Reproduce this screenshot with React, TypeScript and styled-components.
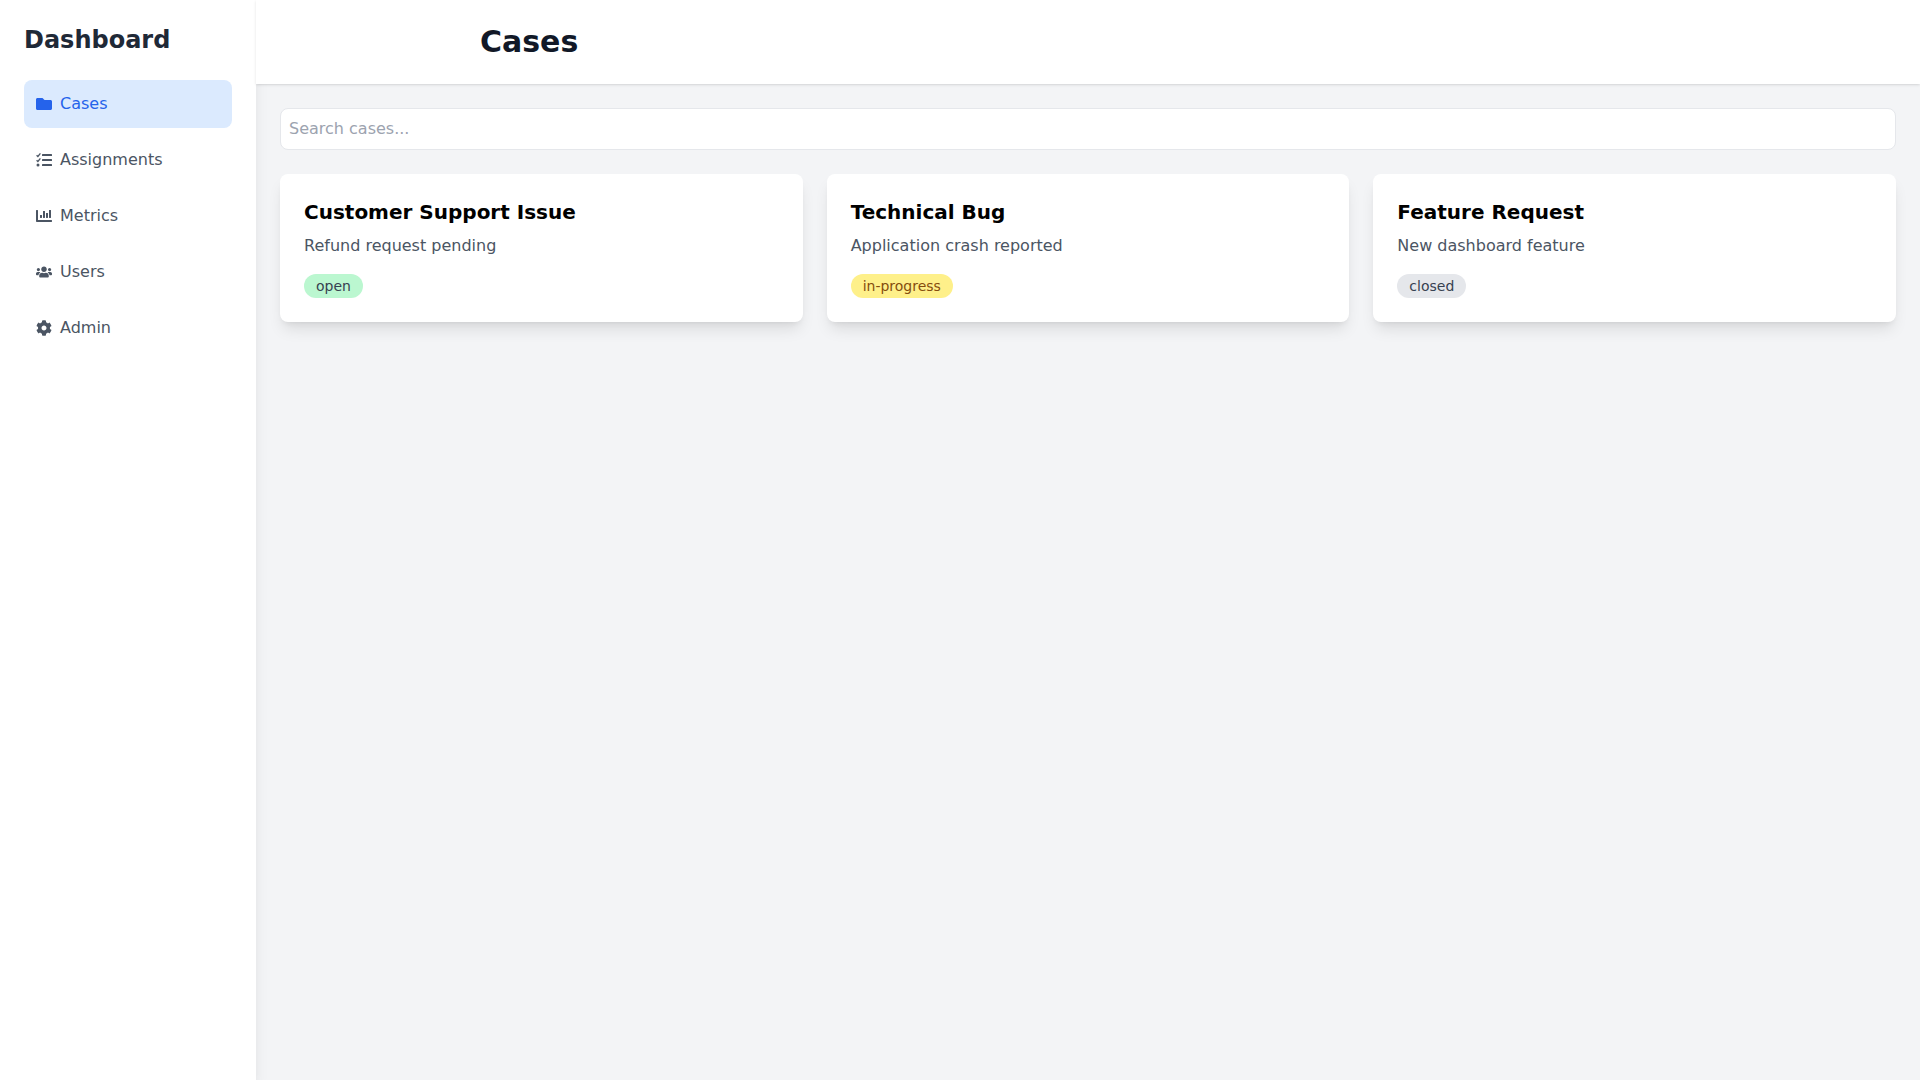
import React from "react";
import styled, { createGlobalStyle } from "styled-components";
import { FaChartBar, FaCog, FaFolder, FaUsers } from "react-icons/fa";

const GlobalStyle = createGlobalStyle`
  html, body {
    margin: 0;
    padding: 0;
    height: 100%;
  }
  body {
    font-family: "DejaVu Sans", sans-serif;
    font-size: 16px;
    line-height: 24px;
    background: #f3f4f6;
  }
  * {
    box-sizing: border-box;
  }
`;

const Layout = styled.div`
  display: flex;
  width: 100%;
  height: 100vh;
  overflow: hidden;
`;

const Sidebar = styled.aside`
  width: 256px;
  flex-shrink: 0;
  padding: 24px;
  background: #ffffff;
  box-shadow: 0 10px 15px -3px rgba(0, 0, 0, 0.1), 0 4px 6px -4px rgba(0, 0, 0, 0.1);
`;

const Brand = styled.h1`
  margin: 0 0 24px;
  font-size: 24px;
  line-height: 32px;
  font-weight: 700;
  color: #1f2937;
`;

const Nav = styled.nav`
  display: flex;
  flex-direction: column;
  gap: 8px;
`;

const NavItem = styled.a<{ $active?: boolean }>`
  display: flex;
  align-items: center;
  gap: 8px;
  padding: 12px;
  border-radius: 8px;
  cursor: pointer;
  color: ${(props) => (props.$active ? "#2563eb" : "#4b5563")};
  background: ${(props) => (props.$active ? "#dbeafe" : "transparent")};

  svg {
    width: 16px;
    height: 16px;
    flex-shrink: 0;
  }
`;

const Main = styled.main`
  flex: 1;
  min-width: 0;
  display: flex;
  flex-direction: column;
`;

const Header = styled.header`
  height: 84px;
  display: flex;
  align-items: center;
  padding-left: 224px;
  background: #ffffff;
  box-shadow: 0 1px 3px 0 rgba(0, 0, 0, 0.1), 0 1px 2px -1px rgba(0, 0, 0, 0.1);
`;

const PageTitle = styled.h2`
  margin: 0;
  font-size: 30px;
  line-height: 36px;
  font-weight: 700;
  color: #111827;
`;

const Content = styled.div`
  padding: 24px;
`;

const SearchInput = styled.input`
  display: block;
  width: 100%;
  height: 42px;
  margin-bottom: 24px;
  padding: 8px 8px 10px;
  border: 1px solid #e5e7eb;
  border-radius: 8px;
  background: #ffffff;
  font-family: inherit;
  font-size: 16px;
  color: #111827;

  &::placeholder {
    color: #9ca3af;
    opacity: 1;
  }
`;

const CardGrid = styled.div`
  display: grid;
  grid-template-columns: repeat(3, minmax(0, 1fr));
  gap: 24px;
`;

const Card = styled.article`
  padding: 24px;
  border-radius: 8px;
  background: #ffffff;
  box-shadow: 0 10px 15px -3px rgba(0, 0, 0, 0.1), 0 4px 6px -4px rgba(0, 0, 0, 0.1);
`;

const CardTitle = styled.h3`
  margin: 0 0 8px;
  font-size: 20px;
  line-height: 28px;
  font-weight: 700;
  color: #000000;
`;

const CardText = styled.p`
  margin: 0 0 16px;
  color: #4b5563;
`;

const statusColors: Record<string, { bg: string; fg: string }> = {
  open: { bg: "#bbf7d0", fg: "#374151" },
  "in-progress": { bg: "#fef08a", fg: "#854d0e" },
  closed: { bg: "#e5e7eb", fg: "#374151" },
};

const Badge = styled.span<{ $status: string }>`
  display: inline-block;
  padding: 2px 12px;
  border-radius: 9999px;
  font-size: 14px;
  line-height: 20px;
  background: ${(props) => statusColors[props.$status].bg};
  color: ${(props) => statusColors[props.$status].fg};
`;

// none of the icon sets has this exact checklist glyph
function ChecklistIcon() {
  return (
    <svg viewBox="0 0 16 16" fill="currentColor">
      <rect x="6" y="2" width="10" height="2" rx="0.5" />
      <rect x="6" y="7" width="10" height="2" rx="0.5" />
      <rect x="6" y="12" width="10" height="2" rx="0.5" />
      <path d="M0.6 3.2 L1.9 4.5 L4.4 1.4" fill="none" stroke="currentColor" strokeWidth="1.3" />
      <path d="M0.6 8.2 L1.9 9.5 L4.4 6.4" fill="none" stroke="currentColor" strokeWidth="1.3" />
      <circle cx="2" cy="13" r="1.5" />
    </svg>
  );
}

const navItems = [
  { label: "Cases", icon: <FaFolder />, active: true },
  { label: "Assignments", icon: <ChecklistIcon /> },
  { label: "Metrics", icon: <FaChartBar /> },
  { label: "Users", icon: <FaUsers /> },
  { label: "Admin", icon: <FaCog /> },
];

const cases = [
  { title: "Customer Support Issue", text: "Refund request pending", status: "open" },
  { title: "Technical Bug", text: "Application crash reported", status: "in-progress" },
  { title: "Feature Request", text: "New dashboard feature", status: "closed" },
];

export default function App() {
  return (
    <Layout>
      <GlobalStyle />
      <Sidebar>
        <Brand>Dashboard</Brand>
        <Nav>
          {navItems.map((item) => (
            <NavItem key={item.label} $active={item.active}>
              {item.icon}
              {item.label}
            </NavItem>
          ))}
        </Nav>
      </Sidebar>
      <Main>
        <Header>
          <PageTitle>Cases</PageTitle>
        </Header>
        <Content>
          <SearchInput placeholder="Search cases..." />
          <CardGrid>
            {cases.map((item) => (
              <Card key={item.title}>
                <CardTitle>{item.title}</CardTitle>
                <CardText>{item.text}</CardText>
                <Badge $status={item.status}>{item.status}</Badge>
              </Card>
            ))}
          </CardGrid>
        </Content>
      </Main>
    </Layout>
  );
}
